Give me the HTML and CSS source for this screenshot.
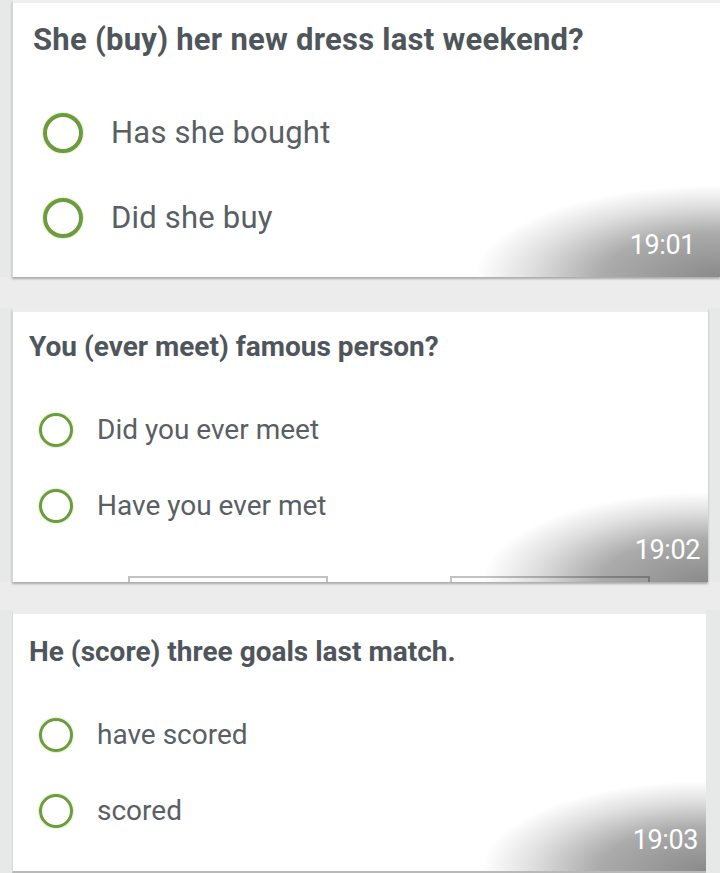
FILE: index.html
```html
<!DOCTYPE html>
<html lang="en">
<head>
<meta charset="utf-8">
<title>Quiz</title>
<link rel="stylesheet" href="styles.css">
</head>
<body>
<main class="stack">
  <section class="shot shot-1">
    <div class="card">
      <h2 class="question">She (buy) her new dress last weekend?</h2>
      <ul class="options">
        <li class="option"><span class="radio"></span><span>Has she bought</span></li>
        <li class="option"><span class="radio"></span><span>Did she buy</span></li>
      </ul>
      <div class="shade"></div>
      <span class="time">19:01</span>
    </div>
  </section>

  <section class="shot shot-2">
    <div class="card">
      <h2 class="question">You (ever meet) famous person?</h2>
      <ul class="options">
        <li class="option"><span class="radio"></span><span>Did you ever meet</span></li>
        <li class="option"><span class="radio"></span><span>Have you ever met</span></li>
      </ul>
      <div class="buttons"><span class="btn"></span><span class="btn"></span></div>
      <div class="shade"></div>
      <span class="time">19:02</span>
    </div>
  </section>

  <section class="shot shot-3">
    <div class="card">
      <h2 class="question">He (score) three goals last match.</h2>
      <ul class="options">
        <li class="option"><span class="radio"></span><span>have scored</span></li>
        <li class="option"><span class="radio"></span><span>scored</span></li>
      </ul>
      <div class="shade"></div>
      <span class="time">19:03</span>
    </div>
  </section>
</main>
</body>
</html>
```

FILE: styles.css
```css
* { box-sizing: border-box; }
html, body {
  margin: 0;
  padding: 0;
  background: #ececec;
  font-family: Roboto, "Noto Sans", "Liberation Sans", sans-serif;
  width: 720px;
  height: 873px;
  overflow: hidden;
}
.stack {
  display: flex;
  flex-direction: column;
}
.shot {
  display: flex;
  flex: none;
  background: #e7e9e9;
  padding-left: 12px;
}
.card {
  position: relative;
  flex: 1;
  background: #fff;
  border-left: 1px solid #d6d8d8;
  display: flex;
  flex-direction: column;
  overflow: hidden;
  box-shadow: 0 2px 2px rgba(0,0,0,0.28);
}
.question {
  margin: 0;
  font-weight: 700;
  color: #4f565b;
}
.options {
  list-style: none;
  margin: 0;
  padding: 0;
  display: flex;
  flex-direction: column;
}
.option {
  display: flex;
  align-items: center;
  color: #595f64;
}
.radio {
  flex: none;
  border-radius: 50%;
  border-style: solid;
  border-color: #6c9c3d;
  box-shadow: 0 0 1px 1px rgba(170, 220, 120, 0.35);
}
.shade {
  position: absolute;
  right: 0;
  bottom: 0;
  pointer-events: none;
}
.time {
  position: absolute;
  color: #fff;
  font-size: 27px;
  line-height: 30px;
  letter-spacing: -0.4px;
}

/* Shot 1 */
.shot-1 { height: 277px; }
.shot-1 .card {
  border-top: 3px solid #eeeeee;
  padding: 17px 0 0 20px;
}
.shot-1 .question { font-size: 31px; line-height: 40px; letter-spacing: 0.25px; }
.shot-1 .options { margin-top: 53px; gap: 45px; padding-left: 10px; }
.shot-1 .option { font-size: 31px; line-height: 40px; gap: 28px; letter-spacing: 0.2px; }
.shot-1 .radio { width: 40px; height: 40px; border-width: 4px; }
.shot-1 .shade {
  width: 260px; height: 100px;
  background: radial-gradient(ellipse 245px 92px at 100% 100%, rgba(0,0,0,0.46) 0%, rgba(0,0,0,0.33) 48%, rgba(0,0,0,0.12) 78%, rgba(0,0,0,0) 100%);
}
.shot-1 .time { right: 25px; bottom: 17px; }

/* Shot 2 */
.shot-2 { height: 274px; margin-top: 31px; padding-right: 12px; }
.shot-2 .card {
  border-top: 4px solid #ededed;
  padding: 17px 0 0 16px;
}
.shot-2 .question { font-size: 28px; line-height: 36px; }
.shot-2 .options { margin-top: 48px; gap: 42px; padding-left: 10px; }
.shot-2 .option { font-size: 28px; line-height: 34px; gap: 24px; }
.shot-2 .radio { width: 34px; height: 34px; border-width: 3.5px; }
.shot-2 .buttons {
  margin-top: auto;
  display: flex;
  gap: 122px;
  padding-left: 99px;
  height: 6px;
}
.shot-2 .btn {
  width: 200px;
  border: 2px solid #c2c2c2;
  border-bottom: none;
}
.shot-2 .shade {
  width: 250px; height: 100px;
  background: radial-gradient(ellipse 225px 90px at 100% 100%, rgba(0,0,0,0.46) 0%, rgba(0,0,0,0.33) 48%, rgba(0,0,0,0.12) 78%, rgba(0,0,0,0) 100%);
}
.shot-2 .time { right: 8px; bottom: 17px; }

/* Shot 3 */
.shot-3 { height: 263px; margin-top: 28px; padding-right: 14px; }
.shot-3 .card {
  border-top: 4px solid #ededed;
  padding: 20px 0 0 16px;
  box-shadow: none;
  border-bottom: 2px solid #b9b9b9;
}
.shot-3 .question { font-size: 28px; line-height: 36px; }
.shot-3 .options { margin-top: 48px; gap: 42px; padding-left: 10px; }
.shot-3 .option { font-size: 28px; line-height: 34px; gap: 24px; }
.shot-3 .radio { width: 34px; height: 34px; border-width: 3.5px; }
.shot-3 .shade {
  width: 250px; height: 100px;
  background: radial-gradient(ellipse 225px 90px at 100% 100%, rgba(0,0,0,0.46) 0%, rgba(0,0,0,0.33) 48%, rgba(0,0,0,0.12) 78%, rgba(0,0,0,0) 100%);
}
.shot-3 .time { right: 8px; bottom: 16px; }
```
